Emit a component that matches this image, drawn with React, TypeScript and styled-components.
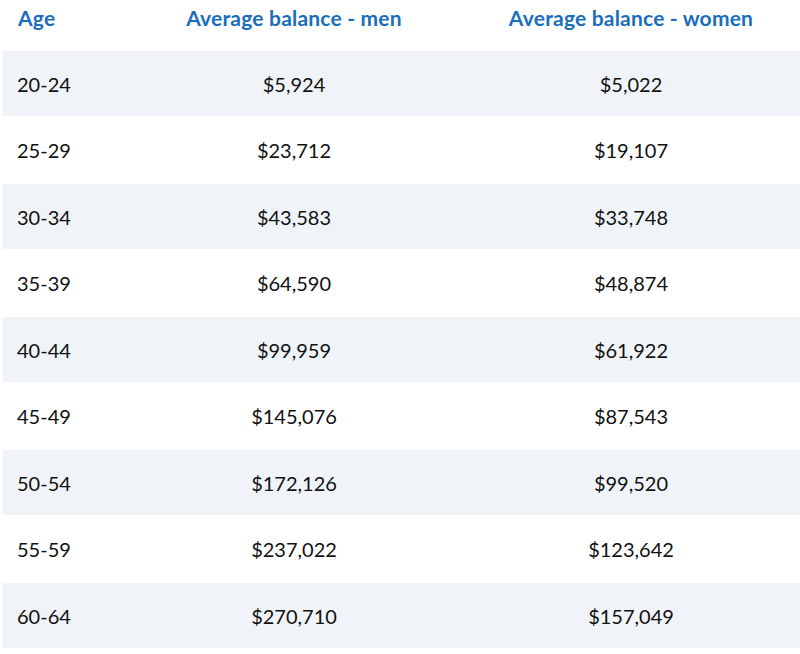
import React from 'react';
import styled, { createGlobalStyle } from 'styled-components';

const GlobalStyle = createGlobalStyle`
  body {
    margin: 0;
    background: #ffffff;
    font-family: Lato, "Open Sans", "Liberation Sans", sans-serif;
  }
`;

interface BalanceRow {
  age: string;
  men: string;
  women: string;
}

const rows: BalanceRow[] = [
  { age: '20-24', men: '$5,924', women: '$5,022' },
  { age: '25-29', men: '$23,712', women: '$19,107' },
  { age: '30-34', men: '$43,583', women: '$33,748' },
  { age: '35-39', men: '$64,590', women: '$48,874' },
  { age: '40-44', men: '$99,959', women: '$61,922' },
  { age: '45-49', men: '$145,076', women: '$87,543' },
  { age: '50-54', men: '$172,126', women: '$99,520' },
  { age: '55-59', men: '$237,022', women: '$123,642' },
  { age: '60-64', men: '$270,710', women: '$157,049' },
];

const Table = styled.div`
  width: 797px;
  margin-left: 3px;
  display: flex;
  flex-direction: column;
`;

const Row = styled.div<{ $shaded?: boolean; $height: number }>`
  display: grid;
  grid-template-columns: 123px 336px 338px;
  align-items: center;
  height: ${p => p.$height}px;
  background: ${p => (p.$shaded ? '#f0f4f8' : '#ffffff')};
`;

const HeadCell = styled.div<{ $align?: 'left' | 'center' }>`
  font-size: 21px;
  font-weight: 700;
  letter-spacing: 0.2px;
  color: #1a6dbd;
  text-align: ${p => p.$align ?? 'center'};
  padding-left: ${p => (p.$align === 'left' ? 15 : 0)}px;
  margin-top: -17px;
`;

const Cell = styled.div<{ $align?: 'left' | 'center' }>`
  font-size: 20px;
  color: #111111;
  text-align: ${p => p.$align ?? 'center'};
  padding-left: ${p => (p.$align === 'left' ? 14 : 0)}px;
`;

const App = () => {
  return (
    <>
      <GlobalStyle />
      <Table>
        <Row $height={51}>
          <HeadCell $align="left">Age</HeadCell>
          <HeadCell>Average balance - men</HeadCell>
          <HeadCell>Average balance - women</HeadCell>
        </Row>
        {rows.map((row, i) => (
          <Row key={row.age} $shaded={i % 2 === 0} $height={i % 2 === 0 ? 65 : 68}>
            <Cell $align="left">{row.age}</Cell>
            <Cell>{row.men}</Cell>
            <Cell>{row.women}</Cell>
          </Row>
        ))}
      </Table>
    </>
  );
};

export default App;
